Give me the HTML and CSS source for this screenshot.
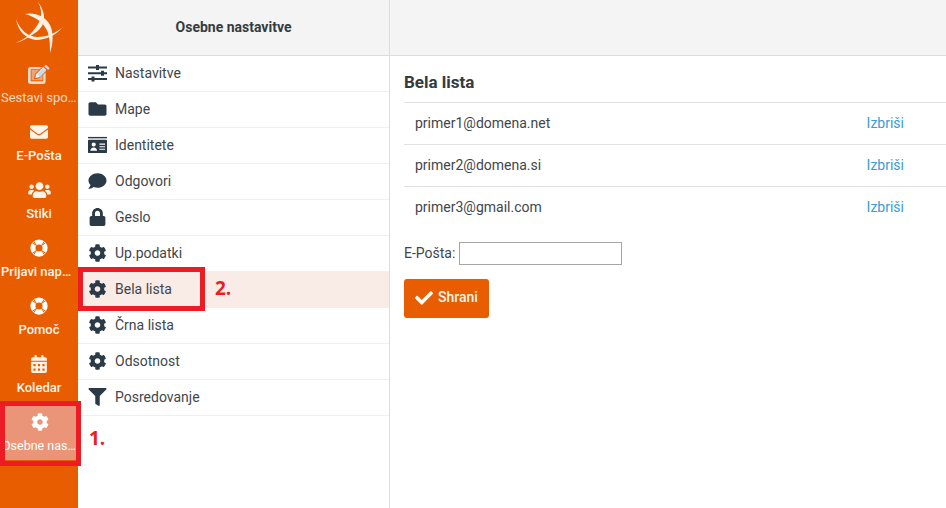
FILE: index.html
```html
<!DOCTYPE html>
<html lang="sl">
<head>
<meta charset="utf-8">
<title>Osebne nastavitve</title>
<link rel="stylesheet" href="styles.css">
</head>
<body>
<svg class="defs" width="0" height="0" aria-hidden="true">
  <symbol id="i-cog" viewBox="0 0 512 512"><path d="M487.4 315.7l-42.6-24.6c4.3-23.2 4.3-47 0-70.2l42.6-24.6c4.9-2.8 7.1-8.6 5.5-14-11.1-35.6-30-67.8-54.7-94.6-3.8-4.1-10-5.1-14.8-2.3L380.8 110c-17.9-15.4-38.5-27.3-60.8-35.1V25.8c0-5.6-3.9-10.5-9.4-11.7-36.7-8.2-74.3-7.8-109.2 0-5.5 1.2-9.4 6.1-9.4 11.7V75c-22.2 7.9-42.8 19.8-60.8 35.1L88.7 85.5c-4.9-2.8-11-1.9-14.8 2.3-24.7 26.7-43.6 58.9-54.7 94.6-1.7 5.4.6 11.2 5.5 14L67.3 221c-4.3 23.2-4.3 47 0 70.2l-42.6 24.6c-4.9 2.8-7.1 8.6-5.5 14 11.1 35.6 30 67.8 54.7 94.6 3.8 4.1 10 5.1 14.8 2.3l42.6-24.6c17.9 15.4 38.5 27.3 60.8 35.1v49.2c0 5.6 3.9 10.5 9.4 11.7 36.7 8.2 74.3 7.8 109.2 0 5.5-1.2 9.4-6.1 9.4-11.7v-49.2c22.2-7.9 42.8-19.8 60.8-35.1l42.6 24.6c4.9 2.8 11 1.9 14.8-2.3 24.7-26.7 43.6-58.9 54.7-94.6 1.5-5.5-.7-11.3-5.6-14.1zM256 336c-44.1 0-80-35.9-80-80s35.9-80 80-80 80 35.9 80 80-35.9 80-80 80z"/></symbol>
  <symbol id="i-check" viewBox="0 0 512 512"><path d="M173.898 439.404l-166.4-166.4c-9.997-9.997-9.997-26.206 0-36.204l36.203-36.204c9.997-9.998 26.207-9.998 36.204 0L192 312.69 432.095 72.596c9.997-9.997 26.207-9.997 36.204 0l36.203 36.204c9.997 9.997 9.997 26.206 0 36.204l-294.4 294.401c-9.998 9.997-26.207 9.997-36.204-.001z"/></symbol>
  <symbol id="i-lock" viewBox="0 0 448 512"><path d="M400 224h-24v-72C376 68.2 307.8 0 224 0S72 68.2 72 152v72H48c-26.5 0-48 21.5-48 48v192c0 26.5 21.5 48 48 48h352c26.5 0 48-21.5 48-48V272c0-26.5-21.5-48-48-48zm-104 0H152v-72c0-39.7 32.3-72 72-72s72 32.3 72 72v72z"/></symbol>
  <symbol id="i-filter" viewBox="0 0 512 512"><path d="M487.976 0H24.028C2.71 0-8.047 25.866 7.058 40.971L192 225.941V432c0 7.831 3.821 15.17 10.237 19.662l80 55.98C298.02 518.69 320 507.493 320 487.98V225.941l184.947-184.97C520.021 25.896 509.338 0 487.976 0z"/></symbol>
  <symbol id="i-folder" viewBox="0 0 512 512"><path d="M464 128H272l-64-64H48C21.49 64 0 85.49 0 112v288c0 26.51 21.49 48 48 48h416c26.51 0 48-21.49 48-48V176c0-26.51-21.49-48-48-48z"/></symbol>
  <symbol id="i-comment" viewBox="0 0 512 512"><path d="M256 32C114.6 32 0 125.1 0 240c0 49.6 21.4 95 57 130.7C44.5 421.1 2.7 466 2.2 466.5c-2.2 2.3-2.8 5.7-1.5 8.7S4.8 480 8 480c66.3 0 116-31.8 140.6-51.4 32.7 12.3 69 19.4 107.4 19.4 141.4 0 256-93.1 256-208S397.4 32 256 32z"/></symbol>
  <symbol id="i-users" viewBox="0 0 640 512"><path d="M96 224c35.3 0 64-28.7 64-64s-28.7-64-64-64-64 28.7-64 64 28.7 64 64 64zm448 0c35.3 0 64-28.7 64-64s-28.7-64-64-64-64 28.7-64 64 28.7 64 64 64zm32 32h-64c-17.6 0-33.5 7.1-45.1 18.6 40.3 22.1 68.9 62 75.1 109.4h66c17.7 0 32-14.3 32-32v-32c0-35.3-28.7-64-64-64zm-256 0c61.9 0 112-50.1 112-112S381.9 32 320 32 208 82.1 208 144s50.1 112 112 112zm76.8 32h-8.3c-20.8 10-43.9 16-68.5 16s-47.6-6-68.5-16h-8.3C179.6 288 128 339.6 128 403.2V432c0 26.5 21.5 48 48 48h288c26.5 0 48-21.5 48-48v-28.8c0-63.6-51.6-115.2-115.2-115.2zm-223.7-13.4C161.5 263.1 145.6 256 128 256H64c-35.3 0-64 28.7-64 64v32c0 17.7 14.3 32 32 32h65.9c6.3-47.4 34.9-87.3 75.2-109.4z"/></symbol>
  <symbol id="i-envelope" viewBox="0 0 512 512"><path d="M502.3 190.8c3.9-3.1 9.7-.2 9.7 4.7V400c0 26.5-21.5 48-48 48H48c-26.5 0-48-21.5-48-48V195.6c0-5 5.7-7.8 9.7-4.7 22.4 17.4 52.1 39.5 154.1 113.6 21.1 15.4 56.7 47.8 92.2 47.6 35.7.3 72-32.8 92.3-47.6 102-74.1 131.6-96.3 154-113.7zM256 320c23.2.4 56.6-29.2 73.4-41.4 132.7-96.3 142.8-104.7 173.4-128.7 5.8-4.5 9.2-11.5 9.2-18.9v-19c0-26.5-21.5-48-48-48H48C21.5 64 0 85.5 0 112v19c0 7.4 3.4 14.3 9.2 18.9 30.6 23.9 40.7 32.4 173.4 128.7 16.8 12.2 50.2 41.8 73.4 41.4z"/></symbol>
  <symbol id="i-ring" viewBox="0 0 24 24"><circle cx="12" cy="12" r="11.5" fill="#fff"/><circle cx="12" cy="12" r="4.8" fill="#e85d00"/><path d="M5 3.200L8.600 8.600M3.200 5L8.600 8.600M19 3.200L15.400 8.600M20.800 5L15.400 8.600M5 20.800L8.600 15.400M3.200 19L8.600 15.400M19 20.800L15.400 15.400M20.800 19L15.400 15.400" fill="none" stroke="#e85d00" stroke-width="1.300"/></symbol>
  <symbol id="i-edit" viewBox="0 0 22 19"><path fill-rule="evenodd" d="M2.500 2h11.500l-2.200 2.200H3.300a.6.600 0 0 0-.6.600v10.900c0 .4.300.6.600.6h11.400c.4 0 .6-.2.600-.6V9.800l2.300-2.300v8.800A2.500 2.500 0 0 1 15.100 19H2.500A2.500 2.500 0 0 1 0 16.300V4.500A2.500 2.500 0 0 1 2.500 2z" fill="#e9dace"/><path d="M3.500 4.900h7.600L6.900 9.100 5.900 14.200l5.200-1 3.500-3.600v5.700h-11z" fill="#efa472"/><path d="M7.300 13l.8-3.700 7.200-7.200 2.900 2.900-7.200 7.200z" fill="#f2f4f4"/><path d="M16.200 1.200l1-1a1 1 0 0 1 1.400 0l2.500 2.500a1 1 0 0 1 0 1.400l-1 1z" fill="#bfdcef"/><path d="M9.300 9.200l6-6 2.700 2.700-6 6z" fill="#bfdcef"/></symbol>
  <symbol id="i-calendar" viewBox="0 0 448 512"><path d="M0 464c0 26.500 21.500 48 48 48h352c26.500 0 48-21.500 48-48V192H0v272zm320-196c0-6.600 5.400-12 12-12h40c6.600 0 12 5.400 12 12v40c0 6.600-5.400 12-12 12h-40c-6.600 0-12-5.400-12-12v-40zm0 128c0-6.600 5.400-12 12-12h40c6.600 0 12 5.400 12 12v40c0 6.600-5.400 12-12 12h-40c-6.600 0-12-5.400-12-12v-40zM192 268c0-6.600 5.400-12 12-12h40c6.600 0 12 5.400 12 12v40c0 6.600-5.400 12-12 12h-40c-6.600 0-12-5.400-12-12v-40zm0 128c0-6.600 5.400-12 12-12h40c6.600 0 12 5.400 12 12v40c0 6.600-5.400 12-12 12h-40c-6.600 0-12-5.400-12-12v-40zM64 268c0-6.600 5.400-12 12-12h40c6.600 0 12 5.400 12 12v40c0 6.600-5.400 12-12 12H76c-6.600 0-12-5.400-12-12v-40zm0 128c0-6.600 5.400-12 12-12h40c6.600 0 12 5.400 12 12v40c0 6.600-5.400 12-12 12H76c-6.600 0-12-5.400-12-12v-40zM400 64h-48V16c0-8.800-7.200-16-16-16h-32c-8.800 0-16 7.200-16 16v48H160V16c0-8.800-7.200-16-16-16h-32c-8.800 0-16 7.200-16 16v48H48C21.500 64 0 85.500 0 112v48h448v-48c0-26.500-21.500-48-48-48z"/></symbol>
  <symbol id="i-sliders" viewBox="0 0 19 18"><path d="M0 2.400h8V1h3v1.400h8v2h-8V6H8V4.400H0zM0 8.200h13V6.800h3v1.400h3v2h-3v1.600h-3v-1.600H0zM0 14h3.500v-1.400h3V14H19v2H6.500v1.600h-3V16H0z"/></symbol>
  <symbol id="i-id" viewBox="0 0 20 17"><path d="M0 0h20v1.500H0z"/><path fill-rule="evenodd" d="M1 3h18a1 1 0 0 1 1 1v12a1 1 0 0 1-1 1H1a1 1 0 0 1-1-1V4a1 1 0 0 1 1-1zm5 2.800a2.200 2.200 0 1 0 0 4.400 2.200 2.200 0 0 0 0-4.400zM2.500 14.500h7c0-2-1.300-3.400-3.500-3.400s-3.500 1.400-3.500 3.400zM12 7v1.200h6V7zm0 2.700v1.200h6V9.700zm0 2.700v1.200h6v-1.200z"/></symbol>
</svg>

<div class="app">
  <nav class="rail">
    <div class="logo">
      <svg viewBox="0 0 78 56" width="78" height="56" fill="#fdf1e6">
        <path d="M38 2C47 14 46 26 35 33C29 37 23 41 16 43C24 39 29 36 33 31C41 22 44 13 38 2z"/>
        <path d="M25 14C35 12 45 16 50 25C54 33 53 44 50 53C50 43 50 34 45 27C40 20 33 16 25 14z"/>
        <path d="M16 19C20 30 28 37 38 37C47 37 56 33 63 27C56 35 46 40 36 40C26 39 18 31 16 19z"/>
      </svg>
    </div>
    <a class="rail-item muted"><svg class="ri ri-edit"><use href="#i-edit"/></svg><span>Sestavi sporočilo</span></a>
    <a class="rail-item"><svg class="ri ri-env"><use href="#i-envelope"/></svg><span>E-Pošta</span></a>
    <a class="rail-item"><svg class="ri ri-wide"><use href="#i-users"/></svg><span>Stiki</span></a>
    <a class="rail-item"><svg class="ri"><use href="#i-ring"/></svg><span>Prijavi napako</span></a>
    <a class="rail-item"><svg class="ri"><use href="#i-ring"/></svg><span>Pomoč</span></a>
    <a class="rail-item"><svg class="ri"><use href="#i-calendar"/></svg><span>Koledar</span></a>
    <a class="rail-item active"><svg class="ri"><use href="#i-cog"/></svg><span>Osebne nastavitve</span></a>
  </nav>

  <section class="middle">
    <header class="head head-mid">Osebne nastavitve</header>
    <ul class="menu">
      <li class="menu-item"><svg class="mi"><use href="#i-sliders"/></svg>Nastavitve</li>
      <li class="menu-item"><svg class="mi"><use href="#i-folder"/></svg>Mape</li>
      <li class="menu-item"><svg class="mi"><use href="#i-id"/></svg>Identitete</li>
      <li class="menu-item"><svg class="mi"><use href="#i-comment"/></svg>Odgovori</li>
      <li class="menu-item"><svg class="mi"><use href="#i-lock"/></svg>Geslo</li>
      <li class="menu-item"><svg class="mi"><use href="#i-cog"/></svg>Up.podatki</li>
      <li class="menu-item selected"><svg class="mi"><use href="#i-cog"/></svg>Bela lista</li>
      <li class="menu-item"><svg class="mi"><use href="#i-cog"/></svg>Črna lista</li>
      <li class="menu-item"><svg class="mi"><use href="#i-cog"/></svg>Odsotnost</li>
      <li class="menu-item"><svg class="mi"><use href="#i-filter"/></svg>Posredovanje</li>
    </ul>
  </section>

  <main class="content">
    <header class="head"></header>
    <div class="panel">
      <h2 class="title">Bela lista</h2>
      <div class="list">
        <div class="row"><span>primer1@domena.net</span><a class="del">Izbriši</a></div>
        <div class="row"><span>primer2@domena.si</span><a class="del">Izbriši</a></div>
        <div class="row"><span>primer3@gmail.com</span><a class="del">Izbriši</a></div>
      </div>
      <label class="field">E-Pošta: <input class="input" type="text"></label>
      <button class="save" type="button"><svg class="check"><use href="#i-check"/></svg>Shrani</button>
    </div>
  </main>

  <div class="mark mark-1"></div>
  <div class="mark mark-2"></div>
  <div class="step step-1">1.</div>
  <div class="step step-2">2.</div>
</div>
</body>
</html>
```
FILE: styles.css
```css
* { box-sizing: border-box; }
html, body { margin: 0; height: 100%; }
body { font-family: Roboto, "Liberation Sans", sans-serif; font-size: 14px; color: #3f464b; background: #fff; overflow: hidden; }
.defs { position: absolute; }
.app { position: relative; display: flex; width: 946px; height: 508px; overflow: hidden; }

.rail { flex: 0 0 78px; background: #e85d00; display: flex; flex-direction: column; }
.logo { height: 56px; }
.logo svg { display: block; }
.rail-item { height: 58px; display: flex; flex-direction: column; align-items: center; padding-top: 9px; color: #fff3e8; font-size: 13px; font-weight: 500; line-height: 14px; }
.rail-item span { display: block; width: 76px; text-align: center; white-space: nowrap; overflow: hidden; text-overflow: ellipsis; margin-top: 8px; }
.ri { width: 18px; height: 18px; fill: #fff3e8; display: block; flex: none; }
.ri-wide { width: 23px; }
.ri-edit { width: 22px; height: 19px; margin-bottom: -1px; }
.ri-env { width: 20px; }
.muted { color: #f7d8c2; font-weight: 400; }
.active { background: #ea9577; margin: 2px 2px 0 4px; height: 54px; padding-top: 7px; width: 72px; color: #fff; font-size: 12.5px; font-weight: 400; }
.active .ri { fill: #fff; }
.active span { flex: none; }

.middle { flex: 0 0 312px; border-right: 1px solid #dcdcdc; }
.head { height: 56px; background: #f4f4f4; border-bottom: 1px solid #dcdcdc; }
.head-mid { display: flex; align-items: center; justify-content: center; font-weight: 700; font-size: 14px; color: #333b40; padding-bottom: 2px; }
.menu { list-style: none; margin: 0; padding: 0; }
.menu-item { height: 36px; display: flex; align-items: center; gap: 8px; padding: 0 0 2px 10px; border-bottom: 1px solid #efefef; }
.menu-item.selected { background: #f9ebe6; }
.mi { width: 19px; height: 18px; fill: #2b3a47; flex: none; }

.content { flex: 1; min-width: 0; }
.panel { padding: 16px 0 0 14px; }
.title { margin: 0 0 10px; font-size: 17px; line-height: 20px; font-weight: 700; color: #333b40; }
.list { border-top: 1px solid #dcdcdc; }
.row { height: 42px; display: flex; align-items: center; justify-content: space-between; padding: 0 42px 2px 11px; border-top: 1px solid #e2e2e2; margin-top: -1px; }
.row + .row { margin-top: 0; }
.del { color: #3a9bd5; }
.field { display: flex; align-items: center; gap: 4px; margin-top: 13px; height: 24px; }
.input { width: 163px; height: 23px; border: 1px solid #a5a5a5; background: #fff; padding: 0; }
.save { display: flex; align-items: center; gap: 5px; margin-top: 14px; width: 85px; height: 39px; padding: 0 0 4px 11px; border: 0; border-radius: 3px; background: #e85d00; color: #fff3e8; font: 500 14px Roboto, sans-serif; }
.check { width: 18px; height: 18px; fill: #fff; margin-top: 2px; }

.mark { position: absolute; border: 5px solid #ed1c24; }
.mark-1 { left: 0; top: 401px; width: 81px; height: 65px; }
.mark-2 { left: 78px; top: 267px; width: 127px; height: 44px; }
.step { position: absolute; color: #ed1c24; font-family: "Open Sans", sans-serif; font-size: 19px; font-weight: 700; line-height: 22px; }
.step-1 { left: 89px; top: 427px; }
.step-2 { left: 215px; top: 277px; }
```
